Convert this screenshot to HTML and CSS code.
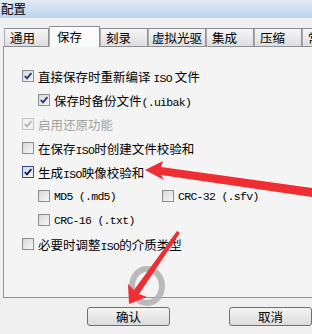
FILE: index.html
```html
<!DOCTYPE html>
<html lang="zh">
<head>
    <meta charset="UTF-8">
    <title>配置</title>
    <link rel="stylesheet" href="styles.css">
</head>
<body>
    <div class="titlebar">配置</div>

    <div class="tabs">
        <div class="tab tab-first">通用</div>
        <div class="tab active">保存</div>
        <div class="tab">刻录</div>
        <div class="tab tab-wide">虚拟光驱</div>
        <div class="tab">集成</div>
        <div class="tab">压缩</div>
        <div class="tab">常规</div>
    </div>

    <div class="panel">
        <div class="row">
            <span class="box checked"><svg viewBox="0 0 10 10"><path d="M1.8 5 L4 7.4 L8.4 2.2"/></svg></span>
            <span>直接保存时重新编译 <span class="lat">ISO</span> 文件</span>
        </div>
        <div class="row indent">
            <span class="box checked"><svg viewBox="0 0 10 10"><path d="M1.8 5 L4 7.4 L8.4 2.2"/></svg></span>
            <span>保存时备份文件<span class="lat">(.uibak)</span></span>
        </div>
        <div class="row disabled">
            <span class="box checked"><svg viewBox="0 0 10 10"><path d="M1.8 5 L4 7.4 L8.4 2.2"/></svg></span>
            <span>启用还原功能</span>
        </div>
        <div class="row">
            <span class="box"></span>
            <span>在保存<span class="lat">ISO</span>时创建文件校验和</span>
        </div>
        <div class="row">
            <span class="box checked focus"><svg viewBox="0 0 10 10"><path d="M1.8 5 L4 7.4 L8.4 2.2"/></svg></span>
            <span>生成<span class="lat">ISO</span>映像校验和</span>
        </div>
        <div class="row indent">
            <div class="opt">
                <span class="box"></span>
                <span class="lat">MD5 (.md5)</span>
            </div>
            <div class="opt">
                <span class="box"></span>
                <span class="lat">CRC-32 (.sfv)</span>
            </div>
        </div>
        <div class="row indent">
            <span class="box"></span>
            <span class="lat">CRC-16 (.txt)</span>
        </div>
        <div class="row">
            <span class="box"></span>
            <span>必要时调整<span class="lat">ISO</span>的介质类型</span>
        </div>
    </div>

    <div class="buttons">
        <button class="btn">确认</button>
        <button class="btn">取消</button>
    </div>

    <!-- annotation marks drawn over the dialog -->
    <svg class="marks" viewBox="0 0 312 334">
        <ellipse cx="147" cy="286" rx="15" ry="17" fill="none" stroke="#b4b4b4" stroke-width="6" opacity="0.9"/>
        <polygon fill="#ee2e32" points="145,170 163,161 161,167 312,188 312,197 161,175 164,180"/>
        <polygon fill="#ee2e32" points="129,304 128,284 134,290 177,231 180,233 139,294 147,297"/>
    </svg>
</body>
</html>
```

FILE: styles.css
```css
body {
    margin: 0;
    width: 312px;
    height: 334px;
    overflow: hidden;
    position: relative;
    background: #f0f0f0;
    font-family: "Noto Sans CJK SC", sans-serif;
    font-size: 12.5px;
    color: #000;
}

.titlebar {
    height: 18px;
    line-height: 17px;
    padding-left: 1px;
    background: linear-gradient(#e4ecf6, #bcd2eb);
}

.tabs {
    display: flex;
    align-items: flex-end;
    height: 20px;
    margin-top: 8px;
    padding-left: 4px;
}
.tab {
    box-sizing: border-box;
    width: 48px;
    height: 18px;
    flex-shrink: 0;
    padding-left: 5px;
    line-height: 17px;
    white-space: nowrap;
    overflow: hidden;
    border: 1px solid #8c8f94;
    border-bottom: none;
    border-left-color: #a9acb1;
    background: linear-gradient(#f6f6f6, #dedede);
}
.tab-first { width: 45px; }
.tab-wide { width: 58px; padding-left: 3px; }
.tab.active {
    width: 51px;
    height: 21px;
    margin-bottom: -1px;
    padding-left: 7px;
    line-height: 19px;
    background: #fbfbfb;
    position: relative;
    z-index: 1;
}

.panel {
    box-sizing: border-box;
    width: 340px;
    height: 252px;
    margin-left: 3px;
    padding: 17px 0 0 18px;
    border: 1px solid #8c8f94;
    background: #f4f4f4;
}

.row {
    display: flex;
    align-items: center;
    gap: 4px;
    height: 24px;
}
.row.indent { margin-left: 16px; }
.row.disabled { color: #a2a2a2; }

.opt {
    display: flex;
    align-items: center;
    gap: 4px;
    width: 120px;
}

.box {
    box-sizing: border-box;
    width: 12px;
    height: 12px;
    flex-shrink: 0;
    border: 1px solid #8d8d8d;
    background: linear-gradient(135deg, #d8d8d8, #f7f7f7);
}
.box svg {
    display: block;
    width: 10px;
    height: 10px;
}
.box svg path {
    fill: none;
    stroke: #2a2f8a;
    stroke-width: 1.8;
}
.box.focus { border-color: #2b4f86; }
.box.focus svg path { stroke: #10155a; }
.disabled .box { border-color: #c2c2c2; background: #f2f2f2; }
.disabled .box svg path { stroke: #b3b3b3; }

.lat {
    font-family: "Liberation Mono", monospace;
    font-size: 11.5px;
    letter-spacing: -0.7px;
}

.buttons {
    display: flex;
    gap: 59px;
    padding-left: 87px;
    margin-top: 9px;
}
.btn {
    width: 85px;
    height: 19px;
    padding: 0;
    border: 1px solid #707070;
    border-radius: 3px;
    background: linear-gradient(#f3f3f3, #dcdcdc);
    font-family: "Noto Sans CJK SC", sans-serif;
    font-size: 12.5px;
    line-height: 16px;
    color: #000;
}

.marks {
    position: absolute;
    left: 0;
    top: 0;
    width: 312px;
    height: 334px;
    pointer-events: none;
}
```
